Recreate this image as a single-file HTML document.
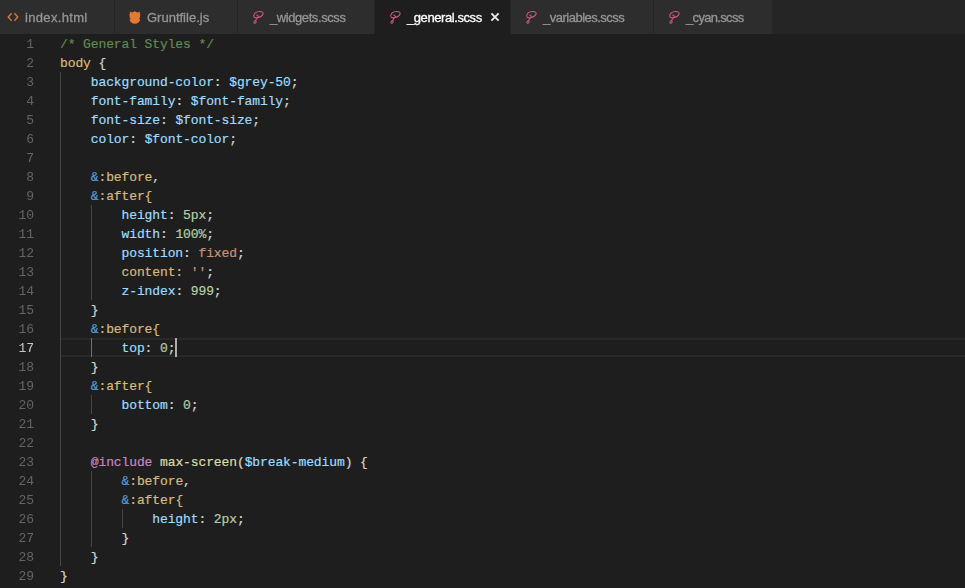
<!DOCTYPE html>
<html><head><meta charset="utf-8"><style>
html,body{margin:0;padding:0;width:965px;height:588px;overflow:hidden;background:#1e1e1e;position:relative}
.tabbar{position:absolute;left:0;top:0;width:965px;height:34px;background:#252526}
.tab{position:absolute;top:0;height:34px;background:#2d2d2d;box-sizing:border-box;border-right:1px solid #252526}
.tab.act{background:#1e1e1e}
.ticon{position:absolute;top:10px;height:14px}
.ico{display:block}
.tlabel{position:absolute;top:10px;font:13px/16px "Liberation Sans",sans-serif;color:#969696;white-space:pre;-webkit-text-stroke:0.3px;will-change:transform}
.tlabel.act{color:#ffffff}
.ln{position:absolute;left:60px;height:19px;font:13px/19px "Liberation Mono",monospace;letter-spacing:-0.11px;white-space:pre;color:#d4d4d4;-webkit-text-stroke:0.2px}
.num{position:absolute;left:0;width:34px;text-align:right;height:19px;font:13px/19px "Liberation Mono",monospace;letter-spacing:-0.11px;color:#646464;will-change:transform}
.num.cur{color:#c6c6c6}
.guide{position:absolute;width:1px;background:#454545}
.guide.act{background:#707070}
.curline{position:absolute;left:61px;top:338px;width:904px;height:19px;box-sizing:border-box;border-top:2px solid #282828;border-bottom:2px solid #282828}
.cursor{position:absolute;left:175px;top:338px;width:2px;height:19px;background:#aeafad}
.c{color:#608b4e}.t{color:#d7ba7d}.p{color:#9cdcfe}.n{color:#b5cea8}.s{color:#ce9178}.k{color:#c586c0}.f{color:#dcdcaa}.d{color:#d4d4d4}.a{color:#569cd6}
</style></head><body>
<div class="tabbar"></div>
<div class="tab" style="left:0px;width:115px"></div><div class="ticon" style="left:7px;top:12px"><svg class="ico" width="12" height="10" viewBox="0 0 12 10"><path d="M4.6 1.3L1.2 5 4.6 8.7M7.4 1.3L10.8 5 7.4 8.7" fill="none" stroke="#e37933" stroke-width="1.3"/></svg></div><div class="tlabel" style="left:25px;letter-spacing:0.33px">index.html</div><div class="tab" style="left:115px;width:123px"></div><div class="ticon" style="left:129px;top:11px"><svg class="ico" width="13" height="13" viewBox="0 0 13 13"><path d="M0.6 0.4L3.2 1.4 5.8 0.2 8.4 1.4 11.2 0.4 10.6 2.2 11.4 3.4 10.9 5.6 11.4 6.6 9.9 7.3 11.1 8.4C10.9 10.9 8.6 12.7 5.9 12.7 3.1 12.7 0.8 10.9 0.6 8.4L1.8 7.3 0.3 6.6 0.8 5.6 0.3 3.4 1.1 2.2Z" fill="#e37933"/></svg></div><div class="tlabel" style="left:147px;letter-spacing:0px">Gruntfile.js</div><div class="tab" style="left:238px;width:137px"></div><div class="ticon" style="left:253px;top:11px"><svg class="ico" width="12" height="13" viewBox="0 0 12 13"><path d="M4.6 6.6C2.2 7.4 0.4 6.2 0.8 4.4 1.2 2.4 3.6 0.8 6.4 0.6 9 0.4 10.6 1.4 10 3 9.4 4.8 7 6.2 4.6 6.6M3.8 4C4.6 4.4 5.4 5.2 5.6 6.2M4.4 6.8C4.2 8.2 2.8 9.2 1.6 10.2 0.6 11 0.8 12.4 2 12.2 3 12 3.4 10.8 2.8 9.8" fill="none" stroke="#d4568a" stroke-width="1.05" stroke-linecap="round"/></svg></div><div class="tlabel" style="left:270px;letter-spacing:-0.42px">_widgets.scss</div><div class="tab act" style="left:375px;width:136px"></div><div class="ticon" style="left:390px;top:11px"><svg class="ico" width="12" height="13" viewBox="0 0 12 13"><path d="M4.6 6.6C2.2 7.4 0.4 6.2 0.8 4.4 1.2 2.4 3.6 0.8 6.4 0.6 9 0.4 10.6 1.4 10 3 9.4 4.8 7 6.2 4.6 6.6M3.8 4C4.6 4.4 5.4 5.2 5.6 6.2M4.4 6.8C4.2 8.2 2.8 9.2 1.6 10.2 0.6 11 0.8 12.4 2 12.2 3 12 3.4 10.8 2.8 9.8" fill="none" stroke="#d4568a" stroke-width="1.05" stroke-linecap="round"/></svg></div><div class="tlabel act" style="left:407px;letter-spacing:-0.42px">_general.scss</div><div class="tab" style="left:511px;width:143px"></div><div class="ticon" style="left:526px;top:11px"><svg class="ico" width="12" height="13" viewBox="0 0 12 13"><path d="M4.6 6.6C2.2 7.4 0.4 6.2 0.8 4.4 1.2 2.4 3.6 0.8 6.4 0.6 9 0.4 10.6 1.4 10 3 9.4 4.8 7 6.2 4.6 6.6M3.8 4C4.6 4.4 5.4 5.2 5.6 6.2M4.4 6.8C4.2 8.2 2.8 9.2 1.6 10.2 0.6 11 0.8 12.4 2 12.2 3 12 3.4 10.8 2.8 9.8" fill="none" stroke="#d4568a" stroke-width="1.05" stroke-linecap="round"/></svg></div><div class="tlabel" style="left:543px;letter-spacing:-0.5px">_variables.scss</div><div class="tab" style="left:654px;width:119px"></div><div class="ticon" style="left:669px;top:11px"><svg class="ico" width="12" height="13" viewBox="0 0 12 13"><path d="M4.6 6.6C2.2 7.4 0.4 6.2 0.8 4.4 1.2 2.4 3.6 0.8 6.4 0.6 9 0.4 10.6 1.4 10 3 9.4 4.8 7 6.2 4.6 6.6M3.8 4C4.6 4.4 5.4 5.2 5.6 6.2M4.4 6.8C4.2 8.2 2.8 9.2 1.6 10.2 0.6 11 0.8 12.4 2 12.2 3 12 3.4 10.8 2.8 9.8" fill="none" stroke="#d4568a" stroke-width="1.05" stroke-linecap="round"/></svg></div><div class="tlabel" style="left:686px;letter-spacing:-0.67px">_cyan.scss</div>
<svg class="close" width="10" height="10" viewBox="0 0 10 10" style="position:absolute;left:490px;top:12px"><path d="M1.4 1.4L8.6 8.6M8.6 1.4L1.4 8.6" stroke="#e8e8e8" stroke-width="1.9"/></svg>
<div class="curline"></div>
<div class="guide" style="left:60px;top:72px;height:494px"></div><div class="guide" style="left:91px;top:205px;height:95px"></div><div class="guide act" style="left:91px;top:338px;height:19px"></div><div class="guide" style="left:91px;top:395px;height:19px"></div><div class="guide" style="left:91px;top:471px;height:76px"></div><div class="guide" style="left:122px;top:509px;height:19px"></div>
<div class="num" style="top:35px">1</div><div class="num" style="top:54px">2</div><div class="num" style="top:73px">3</div><div class="num" style="top:92px">4</div><div class="num" style="top:111px">5</div><div class="num" style="top:130px">6</div><div class="num" style="top:149px">7</div><div class="num" style="top:168px">8</div><div class="num" style="top:187px">9</div><div class="num" style="top:206px">10</div><div class="num" style="top:225px">11</div><div class="num" style="top:244px">12</div><div class="num" style="top:263px">13</div><div class="num" style="top:282px">14</div><div class="num" style="top:301px">15</div><div class="num" style="top:320px">16</div><div class="num cur" style="top:339px">17</div><div class="num" style="top:358px">18</div><div class="num" style="top:377px">19</div><div class="num" style="top:396px">20</div><div class="num" style="top:415px">21</div><div class="num" style="top:434px">22</div><div class="num" style="top:453px">23</div><div class="num" style="top:472px">24</div><div class="num" style="top:491px">25</div><div class="num" style="top:510px">26</div><div class="num" style="top:529px">27</div><div class="num" style="top:548px">28</div><div class="num" style="top:567px">29</div>
<div class="ln" style="top:35px"><span class="c">/* General Styles */</span></div><div class="ln" style="top:54px"><span class="t">body</span><span class="d"> {</span></div><div class="ln" style="top:73px"><span class="d">    </span><span class="p">background-color</span><span class="d">: </span><span class="p">$grey-50</span><span class="d">;</span></div><div class="ln" style="top:92px"><span class="d">    </span><span class="p">font-family</span><span class="d">: </span><span class="p">$font-family</span><span class="d">;</span></div><div class="ln" style="top:111px"><span class="d">    </span><span class="p">font-size</span><span class="d">: </span><span class="p">$font-size</span><span class="d">;</span></div><div class="ln" style="top:130px"><span class="d">    </span><span class="p">color</span><span class="d">: </span><span class="p">$font-color</span><span class="d">;</span></div><div class="ln" style="top:149px"></div><div class="ln" style="top:168px"><span class="d">    </span><span class="a">&amp;</span><span class="t">:before</span><span class="d">,</span></div><div class="ln" style="top:187px"><span class="d">    </span><span class="a">&amp;</span><span class="t">:after{</span></div><div class="ln" style="top:206px"><span class="d">        </span><span class="p">height</span><span class="d">: </span><span class="n">5px</span><span class="d">;</span></div><div class="ln" style="top:225px"><span class="d">        </span><span class="p">width</span><span class="d">: </span><span class="n">100%</span><span class="d">;</span></div><div class="ln" style="top:244px"><span class="d">        </span><span class="p">position</span><span class="d">: </span><span class="s">fixed</span><span class="d">;</span></div><div class="ln" style="top:263px"><span class="d">        </span><span class="t">content:</span><span class="d"> </span><span class="s">''</span><span class="d">;</span></div><div class="ln" style="top:282px"><span class="d">        </span><span class="p">z-index</span><span class="d">: </span><span class="n">999</span><span class="d">;</span></div><div class="ln" style="top:301px"><span class="d">    }</span></div><div class="ln" style="top:320px"><span class="d">    </span><span class="a">&amp;</span><span class="t">:before{</span></div><div class="ln" style="top:339px"><span class="d">        </span><span class="p">top</span><span class="d">: </span><span class="n">0</span><span class="d">;</span></div><div class="ln" style="top:358px"><span class="d">    }</span></div><div class="ln" style="top:377px"><span class="d">    </span><span class="a">&amp;</span><span class="t">:after{</span></div><div class="ln" style="top:396px"><span class="d">        </span><span class="p">bottom</span><span class="d">: </span><span class="n">0</span><span class="d">;</span></div><div class="ln" style="top:415px"><span class="d">    }</span></div><div class="ln" style="top:434px"></div><div class="ln" style="top:453px"><span class="d">    </span><span class="k">@include</span><span class="d"> </span><span class="f">max-screen</span><span class="d">(</span><span class="p">$break-medium</span><span class="d">) {</span></div><div class="ln" style="top:472px"><span class="d">        </span><span class="a">&amp;</span><span class="t">:before</span><span class="d">,</span></div><div class="ln" style="top:491px"><span class="d">        </span><span class="a">&amp;</span><span class="t">:after{</span></div><div class="ln" style="top:510px"><span class="d">            </span><span class="p">height</span><span class="d">: </span><span class="n">2px</span><span class="d">;</span></div><div class="ln" style="top:529px"><span class="d">        }</span></div><div class="ln" style="top:548px"><span class="d">    }</span></div><div class="ln" style="top:567px"><span class="d">}</span></div>
<div class="cursor"></div>
</body></html>
